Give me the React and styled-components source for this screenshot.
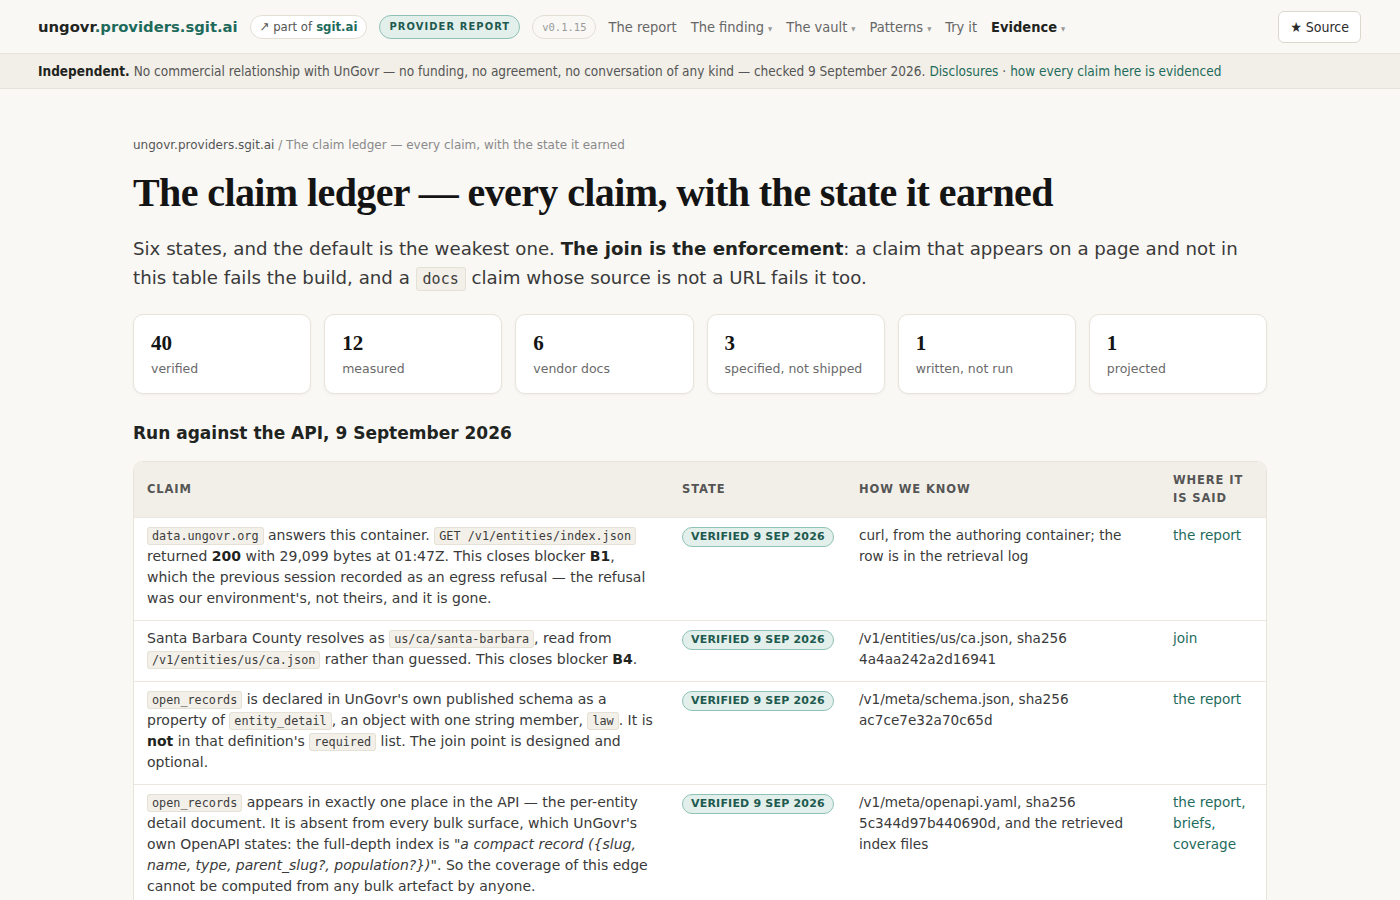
import React from 'react';
import styled, { createGlobalStyle } from 'styled-components';

const GlobalStyle = createGlobalStyle`
  * { box-sizing: border-box; }
  body {
    margin: 0;
    background: #f9f8f5;
    font-family: "DejaVu Sans", "Noto Sans", sans-serif;
    color: #2b2b2b;
  }
  a { text-decoration: none; color: #1e6b5c; }
`;

const TopBar = styled.header`
  display: flex;
  align-items: center;
  height: 54px;
  padding: 0 39px 0 38px;
  border-bottom: 1px solid #e6e2d9;
  font-family: "DejaVu Sans Condensed", "DejaVu Sans", sans-serif;
`;

const Logo = styled.a`
  font-family: "DejaVu Sans", sans-serif;
  font-weight: 700;
  font-size: 14.8px;
  color: #1f2421;
  margin-right: 12px;
  span { color: #1e6b5c; }
`;

const Pill = styled.span`
  display: inline-flex;
  align-items: center;
  height: 24px;
  padding: 0 9px;
  margin-right: 12px;
  border-radius: 999px;
  border: 1px solid ${p => (p.$tone === 'teal' ? '#8fc2b6' : '#e3dfd5')};
  background: ${p => (p.$tone === 'teal' ? '#e3efeb' : p.$tone === 'ghost' ? 'transparent' : '#fff')};
  color: ${p => (p.$tone === 'teal' ? '#1e5a4f' : p.$tone === 'ghost' ? '#9a9a9a' : '#555')};
  font-size: ${p => (p.$tone === 'teal' ? '11px' : '13px')};
  font-weight: ${p => (p.$tone === 'teal' ? 700 : 400)};
  letter-spacing: ${p => (p.$tone === 'teal' ? '1.1px' : '0')};
  font-family: ${p => (p.$tone === 'ghost' ? '"DejaVu Sans Mono", monospace' : 'inherit')};
  ${p => p.$tone === 'ghost' && 'font-size: 10.5px;'}
  b { color: #1e6b5c; margin-left: 4px; }
`;

const Nav = styled.nav`
  display: flex;
  align-items: center;
  gap: 14px;
`;

const NavItem = styled.a`
  font-size: 14.5px;
  color: ${p => (p.$active ? '#1f2421' : '#666')};
  font-weight: ${p => (p.$active ? 700 : 400)};
  display: inline-flex;
  align-items: center;
`;

const Caret = styled.span`
  font-size: 6px;
  color: #999;
  margin-left: 4px;
  margin-top: 3px;
`;

const SourceButton = styled.button`
  margin-left: auto;
  height: 32px;
  padding: 0 11px;
  background: #fff;
  border: 1px solid #ddd8cd;
  border-radius: 6px;
  font-family: inherit;
  font-size: 14px;
  color: #2b2b2b;
`;

const Banner = styled.div`
  height: 35px;
  display: flex;
  align-items: center;
  padding: 0 38px;
  background: #f2efe8;
  border-bottom: 1px solid #e6e2d9;
  font-family: "DejaVu Sans Condensed", "DejaVu Sans", sans-serif;
  font-size: 13.5px;
  color: #555;
  b { color: #1f2421; margin-right: 4px; }
  a { margin-left: 4px; }
`;

const Main = styled.main`
  width: 1134px;
  margin: 0 auto;
  padding-top: 49px;
`;

const Crumbs = styled.div`
  font-size: 12px;
  color: #8a8a8a;
  span { color: #555; }
`;

const Title = styled.h1`
  margin: 17px 0 0;
  font-family: "Liberation Serif", "Times New Roman", serif;
  font-size: 40px;
  font-weight: 700;
  letter-spacing: -0.6px;
  color: #141414;
  line-height: 1.2;
`;

const Lead = styled.p`
  margin: 17px 0 0;
  max-width: 1115px;
  font-size: 18.2px;
  line-height: 29px;
  color: #3a3a3a;
  b { color: #1f2421; }
`;

const Code = styled.code`
  font-family: "DejaVu Sans Mono", monospace;
  font-size: ${p => (p.$big ? '15px' : '11.8px')};
  line-height: 1;
  background: #f3f0e9;
  border: 1px solid #e6e1d6;
  border-radius: 3px;
  padding: ${p => (p.$big ? '2px 6px' : '1px 4px')};
  color: #3d3d3d;
`;

const Stats = styled.div`
  display: grid;
  grid-template-columns: repeat(6, 1fr);
  gap: 13px;
  margin-top: 22px;
`;

const StatCard = styled.div`
  height: 80px;
  padding: 15px 17px;
  background: #fff;
  border: 1px solid #e8e4da;
  border-radius: 10px;
  box-shadow: 0 1px 3px rgba(60, 50, 20, 0.05);
`;

const StatNumber = styled.div`
  font-family: "Liberation Serif", "Times New Roman", serif;
  font-weight: 700;
  font-size: 21px;
  color: #141414;
  line-height: 26px;
`;

const StatLabel = styled.div`
  margin-top: 5px;
  font-size: 12.5px;
  white-space: nowrap;
  color: #6a6a6a;
`;

const SectionTitle = styled.h2`
  margin: 29px 0 18px;
  font-size: 17px;
  font-weight: 700;
  color: #1f2421;
`;

const TableWrap = styled.div`
  background: #fff;
  border: 1px solid #e8e4da;
  border-radius: 10px;
  overflow: hidden;
`;

const Table = styled.table`
  width: 100%;
  border-collapse: collapse;
  table-layout: fixed;
`;

const Th = styled.th`
  background: #f2efe8;
  height: 55px;
  padding: 0 13px;
  text-align: left;
  font-size: 11.5px;
  font-weight: 700;
  letter-spacing: 0.9px;
  line-height: 18px;
  color: #555;
  text-transform: uppercase;
`;

const Td = styled.td`
  vertical-align: top;
  padding: 7px 13px 11px;
  border-top: 1px solid #ebe7de;
  font-size: ${p => (p.$claim ? '14px' : '13.6px')};
  line-height: 21px;
  color: #3a3a3a;
  b { color: #1f2421; }
`;

const Badge = styled.span`
  display: inline-block;
  margin-top: 2px;
  padding: 2px 8px;
  border-radius: 999px;
  border: 1px solid #8fc2b6;
  background: #e3efeb;
  color: #1e5a4f;
  font-size: 11px;
  font-weight: 700;
  letter-spacing: 0.2px;
  line-height: 14px;
  white-space: nowrap;
`;

const rows = [
  {
    claim: (
      <>
        <Code>data.ungovr.org</Code> answers this container. <Code>GET /v1/entities/index.json</Code> returned{' '}
        <b>200</b> with 29,099 bytes at 01:47Z. This closes blocker <b>B1</b>, which the previous session recorded as
        an egress refusal — the refusal was our environment's, not theirs, and it is gone.
      </>
    ),
    how: 'curl, from the authoring container; the row is in the retrieval log',
    where: ['the report'],
  },
  {
    claim: (
      <>
        Santa Barbara County resolves as <Code>us/ca/santa-barbara</Code>, read from <Code>/v1/entities/us/ca.json</Code>{' '}
        rather than guessed. This closes blocker <b>B4</b>.
      </>
    ),
    how: '/v1/entities/us/ca.json, sha256 4a4aa242a2d16941',
    where: ['join'],
  },
  {
    claim: (
      <>
        <Code>open_records</Code> is declared in UnGovr's own published schema as a property of{' '}
        <Code>entity_detail</Code>, an object with one string member, <Code>law</Code>. It is <b>not</b> in that
        definition's <Code>required</Code> list. The join point is designed and optional.
      </>
    ),
    how: '/v1/meta/schema.json, sha256 ac7ce7e32a70c65d',
    where: ['the report'],
  },
  {
    claim: (
      <>
        <Code>open_records</Code> appears in exactly one place in the API — the per-entity detail document. It is
        absent from every bulk surface, which UnGovr's own OpenAPI states: the full-depth index is{' '}
        <i>"a compact record ({'{'}slug, name, type, parent_slug?, population?{'}'})"</i>. So the coverage of this edge
        cannot be computed from any bulk artefact by anyone.
      </>
    ),
    how: '/v1/meta/openapi.yaml, sha256 5c344d97b440690d, and the retrieved index files',
    where: ['the report,', 'briefs,', 'coverage'],
  },
];

const stats = [
  ['40', 'verified'],
  ['12', 'measured'],
  ['6', 'vendor docs'],
  ['3', 'specified, not shipped'],
  ['1', 'written, not run'],
  ['1', 'projected'],
];

const navItems = [
  { label: 'The report' },
  { label: 'The finding', menu: true },
  { label: 'The vault', menu: true },
  { label: 'Patterns', menu: true },
  { label: 'Try it' },
  { label: 'Evidence', menu: true, active: true },
];

export default function App() {
  return (
    <>
      <GlobalStyle />
      <TopBar>
        <Logo href="#">
          ungovr<span>.providers.sgit.ai</span>
        </Logo>
        <Pill>
          ↗ part of<b>sgit.ai</b>
        </Pill>
        <Pill $tone="teal">PROVIDER REPORT</Pill>
        <Pill $tone="ghost">v0.1.15</Pill>
        <Nav>
          {navItems.map(item => (
            <NavItem key={item.label} href="#" $active={item.active}>
              {item.label}
              {item.menu && <Caret>▼</Caret>}
            </NavItem>
          ))}
        </Nav>
        <SourceButton>★ Source</SourceButton>
      </TopBar>
      <Banner>
        <b>Independent.</b> No commercial relationship with UnGovr — no funding, no agreement, no conversation of any
        kind — checked 9 September 2026. <a href="#">Disclosures</a>&nbsp;·<a href="#">how every claim here is evidenced</a>
      </Banner>
      <Main>
        <Crumbs>
          <span>ungovr.providers.sgit.ai</span> / The claim ledger — every claim, with the state it earned
        </Crumbs>
        <Title>The claim ledger — every claim, with the state it earned</Title>
        <Lead>
          Six states, and the default is the weakest one. <b>The join is the enforcement</b>: a claim that appears on a
          page and not in this table fails the build, and a <Code $big>docs</Code> claim whose source is not a URL fails
          it too.
        </Lead>
        <Stats>
          {stats.map(([n, label]) => (
            <StatCard key={label}>
              <StatNumber>{n}</StatNumber>
              <StatLabel>{label}</StatLabel>
            </StatCard>
          ))}
        </Stats>
        <SectionTitle>Run against the API, 9 September 2026</SectionTitle>
        <TableWrap>
          <Table>
            <colgroup>
              <col style={{ width: 535 }} />
              <col style={{ width: 177 }} />
              <col style={{ width: 314 }} />
              <col />
            </colgroup>
            <thead>
              <tr>
                <Th>Claim</Th>
                <Th>State</Th>
                <Th>How we know</Th>
                <Th>Where it is said</Th>
              </tr>
            </thead>
            <tbody>
              {rows.map((r, i) => (
                <tr key={i}>
                  <Td $claim>{r.claim}</Td>
                  <Td>
                    <Badge>VERIFIED 9 SEP 2026</Badge>
                  </Td>
                  <Td>{r.how}</Td>
                  <Td>
                    {r.where.map(w => (
                      <React.Fragment key={w}>
                        <a href="#">{w}</a>{' '}
                      </React.Fragment>
                    ))}
                  </Td>
                </tr>
              ))}
            </tbody>
          </Table>
        </TableWrap>
      </Main>
    </>
  );
}
